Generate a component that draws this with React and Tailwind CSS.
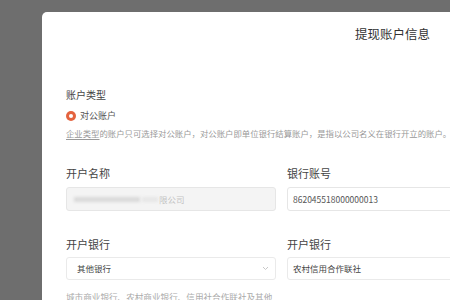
import React from 'react';

const font = { fontFamily: '"Noto Sans CJK SC", "Noto Sans", sans-serif' };

const Label = ({ children }) => (
    <div className="text-[11px] leading-[14px] text-[#444]">{children}</div>
);

const App = () => {
    return (
        <div
            className="w-[450px] h-[300px] bg-[#6e6e6e] overflow-hidden pt-[12px] pl-[42px]"
            style={font}
        >
            <div className="bg-white rounded-tl-[5px] h-[288px] w-[600px]">
                <div className="h-[44px] flex items-center pl-[313px] text-[12.5px] text-[#333]">
                    提现账户信息
                </div>

                <div className="pl-[24px]">
                    <div className="mt-[32px] text-[10px] leading-[14px] text-[#444]">账户类型</div>

                    <div className="mt-[8px] flex items-center h-[12px]">
                        <span className="w-[10px] h-[10px] rounded-full bg-[#e4633f] flex items-center justify-center">
                            <span className="w-[4px] h-[4px] rounded-full bg-white" />
                        </span>
                        <span className="ml-[4px] text-[9px] leading-[12px] text-[#555]">对公账户</span>
                    </div>

                    <div className="mt-[5px] text-[8.4px] leading-[12px] text-[#999] whitespace-nowrap">
                        <span className="underline decoration-[#999] underline-offset-2">企业类型</span>
                        的账户只可选择对公账户，对公账户即单位银行结算账户，是指以公司名义在银行开立的账户。
                    </div>

                    <div className="mt-[27px] grid grid-cols-[210px_210px] gap-x-[11px]">
                        <div>
                            <Label>开户名称</Label>
                            <div className="mt-[7px] h-[24px] rounded-[3px] border border-[#e6e6e6] bg-[#f4f4f4] flex items-center pl-[7px]">
                                <span className="w-[66px] h-[5px] bg-[#d9d9d9] blur-[1.5px]" />
                                <span className="w-[16px] h-[5px] bg-[#e6e6e6] blur-[1.5px] ml-[2px]" />
                                <span className="ml-[1px] text-[8.5px] text-[#c4c4c4]">限公司</span>
                            </div>
                        </div>
                        <div>
                            <Label>银行账号</Label>
                            <div className="mt-[7px] h-[24px] rounded-[3px] border border-[#e6e6e6] bg-white flex items-center pl-[5px] text-[8.5px] text-[#555]">
                                862045518000000013
                            </div>
                        </div>
                    </div>

                    <div className="mt-[26px] grid grid-cols-[210px_210px] gap-x-[11px]">
                        <div>
                            <Label>开户银行</Label>
                            <div className="mt-[6px] h-[23px] rounded-[3px] border border-[#eaeaea] bg-white flex items-center justify-between pl-[10px] pr-[6px] text-[8.5px] text-[#444]">
                                <span>其他银行</span>
                                <svg width="7" height="5" viewBox="0 0 7 5" fill="none">
                                    <path d="M1 1l2.5 2.5L6 1" stroke="#c8c8c8" strokeWidth="1" />
                                </svg>
                            </div>
                        </div>
                        <div>
                            <Label>开户银行</Label>
                            <div className="mt-[6px] h-[23px] rounded-[3px] border border-[#eaeaea] bg-white flex items-center pl-[5px] text-[8.5px] text-[#444]">
                                农村信用合作联社
                            </div>
                        </div>
                    </div>

                    <div className="mt-[11px] text-[8.6px] leading-[12px] text-[#aaa] whitespace-nowrap">
                        城市商业银行、农村商业银行、信用社合作联社及其他
                    </div>
                </div>
            </div>
        </div>
    );
};

export default App;
